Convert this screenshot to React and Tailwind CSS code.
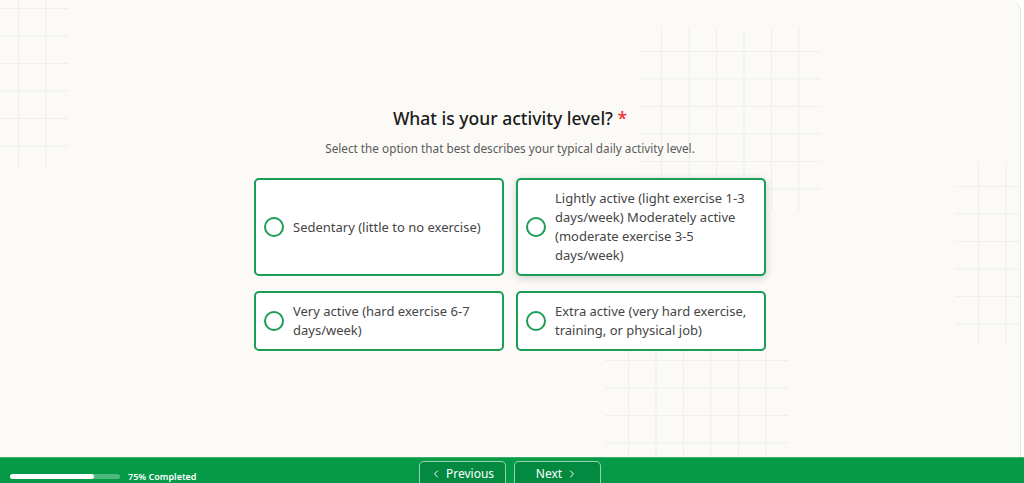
import React from "react";
import { ChevronLeft, ChevronRight } from "lucide-react";

const options = [
  { id: 1, label: "Sedentary (little to no exercise)" },
  {
    id: 2,
    label:
      "Lightly active (light exercise 1-3 days/week) Moderately active (moderate exercise 3-5 days/week)",
    hover: true,
  },
  { id: 3, label: "Very active (hard exercise 6-7 days/week)" },
  { id: 4, label: "Extra active (very hard exercise, training, or physical job)" },
];

// faint square grid used as background decoration
const Grid = ({ className }) => (
  <svg
    className={`absolute pointer-events-none ${className}`}
    width="183"
    height="183"
    viewBox="0 0 183 183"
  >
    {[0, 1, 2, 3, 4, 5].map((i) => (
      <g key={i} stroke="#f0efea" strokeWidth="1">
        <line x1={23.5 + i * 27.5} y1="0" x2={23.5 + i * 27.5} y2="183" />
        <line x1="0" y1={23.5 + i * 27.5} x2="183" y2={23.5 + i * 27.5} />
      </g>
    ))}
  </svg>
);

const Option = ({ label, hover }) => (
  <button
    className={`flex items-center gap-[9px] w-[250px] rounded-[5px] border-2 border-[#1b9d55] bg-white pl-[8px] pr-[10px] py-[9px] text-left ${
      hover && "shadow-[0_2px_8px_rgba(0,0,0,0.18)]"
    }`}
  >
    <span className="shrink-0 w-5 h-5 rounded-full border-2 border-[#1b9d55]" />
    <span className="text-[13px] leading-[19px] text-[#454545]">{label}</span>
  </button>
);

export default function App() {
  return (
    <div className="h-[483px] w-full bg-white overflow-hidden flex flex-col font-['Noto_Sans',sans-serif]">
      <div className="relative h-[457px] w-[1021px] bg-[#fbfaf6] rounded-tr-[12px] border-r border-[#e4e3de] overflow-hidden">
        <Grid className="left-[-115px] top-[-15px]" />
        <Grid className="left-[638px] top-[28px]" />
        <Grid className="left-[955px] top-[163px]" />
        <Grid className="left-[605px] top-[337px]" />

        <div className="relative flex flex-col items-center pt-[106px]">
          <h1 className="text-[17.5px] leading-6 font-medium text-[#1b1b1b]">
            What is your activity level? <span className="text-[#ef2b2b]">*</span>
          </h1>
          <p className="mt-[10px] text-[11.75px] leading-4 text-[#5a5a5a]">
            Select the option that best describes your typical daily activity level.
          </p>
          <div className="mt-[22px] grid grid-cols-[250px_250px] gap-x-3 gap-y-[15px]">
            {options.map((opt) => (
              <Option key={opt.id} label={opt.label} hover={opt.hover} />
            ))}
          </div>
        </div>
      </div>

      <div className="relative h-[26px] bg-[#049a48] border-t border-[#3cb06b] overflow-hidden">
        <div className="absolute left-[10px] top-[12px] flex items-center gap-2">
          <div className="w-[110px] h-[5px] rounded-full bg-white/30">
            <div className="w-[76%] h-full rounded-full bg-white" />
          </div>
          <span className="text-[9px] font-semibold text-white">75% Completed</span>
        </div>
        <div className="flex justify-center gap-2 w-[1019px] pt-[3px]">
          <button className="flex items-center justify-center gap-1 w-[87px] h-[30px] rounded-[5px] border border-white/60 bg-[#038a40] text-white text-[12px] pb-[4px]">
            <ChevronLeft size={12} strokeWidth={2} />
            Previous
          </button>
          <button className="flex items-center justify-center gap-1 w-[87px] h-[30px] rounded-[5px] border border-white/60 bg-[#038a40] text-white text-[12px] pb-[4px]">
            Next
            <ChevronRight size={12} strokeWidth={2} />
          </button>
        </div>
      </div>
    </div>
  );
}
